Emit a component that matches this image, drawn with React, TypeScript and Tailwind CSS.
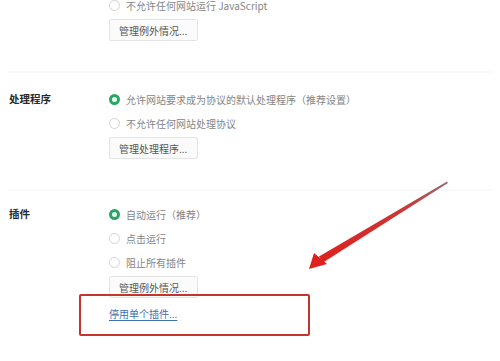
import React from "react";

function Radio({ checked }: { checked?: boolean }) {
  return checked ? (
    <span className="w-[11px] h-[11px] rounded-full border-[3px] border-[#2aa563] bg-[#eafff2] shrink-0" />
  ) : (
    <span className="w-[11px] h-[11px] rounded-full border border-[#d4d4d4] bg-white shrink-0" />
  );
}

function Option({ checked, text }: { checked?: boolean; text: string }) {
  return (
    <div className="h-6 flex items-center gap-[6px] text-[10px] text-[#858585]">
      <Radio checked={checked} />
      <span>{text}</span>
    </div>
  );
}

function Btn({ text }: { text: string }) {
  return (
    <div className="mt-[2px] h-[22px] w-[89px] flex items-center pl-[9px] border border-[#e4e4e4] bg-[#fbfbfb] text-[10px] text-[#555] rounded-[2px]">
      {text}
    </div>
  );
}

function Section({ label, children }: { label?: string; children: React.ReactNode }) {
  return (
    <div className="flex">
      <div className="w-[109px] pl-[9px] h-6 flex items-center text-[10.5px] font-bold text-[#2a2a2a]">{label}</div>
      <div className="flex flex-col">{children}</div>
    </div>
  );
}

export default function App() {
  return (
    <div
      className="relative w-[500px] h-[361px] overflow-hidden bg-white"
      style={{ fontFamily: '"Noto Sans CJK SC", "Noto Sans", sans-serif' }}
    >
      <div className="mt-[-7px]">
        <Section>
          <Option text="不允许任何网站运行 JavaScript" />
          <Btn text="管理例外情况..." />
        </Section>
      </div>
      <div className="mt-[30px] mx-[8px] h-[2px] bg-[#f9f9f9]" />
      <div className="mt-[14px]">
        <Section label="处理程序">
          <Option checked text="允许网站要求成为协议的默认处理程序（推荐设置）" />
          <Option text="不允许任何网站处理协议" />
          <Btn text="管理处理程序..." />
        </Section>
      </div>
      <div className="mt-[30px] mx-[8px] h-[2px] bg-[#f9f9f9]" />
      <div className="mt-[11px]">
        <Section label="插件">
          <Option checked text="自动运行（推荐）" />
          <Option text="点击运行" />
          <Option text="阻止所有插件" />
          <Btn text="管理例外情况..." />
          <div className="mt-[5px] h-5 flex items-center">
            <span className="text-[10px] text-[#3f6fb0] underline underline-offset-2">停用单个插件...</span>
          </div>
        </Section>
      </div>

      <div className="absolute left-[79px] top-[294px] w-[231px] h-[42px] border-2 border-[#c5342d] rounded-[2px]" />

      <svg className="absolute left-0 top-0" width="500" height="361" viewBox="0 0 500 361">
        <defs>
          <linearGradient id="g" x1="447" y1="182" x2="312" y2="266" gradientUnits="userSpaceOnUse">
            <stop offset="0" stopColor="#9a6a78" />
            <stop offset="0.3" stopColor="#c8383a" />
            <stop offset="1" stopColor="#e0201c" />
          </linearGradient>
        </defs>
        <polygon points="447,181.5 448,183 323,262.5 319,256.5" fill="url(#g)" />
        <polygon points="309,269 314,253 327,264" fill="#e0201c" />
      </svg>
    </div>
  );
}
